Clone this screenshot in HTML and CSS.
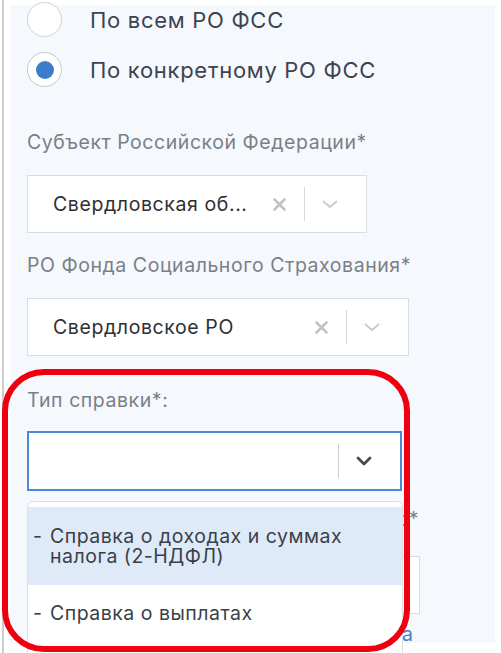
FILE: index.html
```html
<!DOCTYPE html>
<html lang="ru">
<head>
<meta charset="utf-8">
<title>Справка</title>
<link rel="stylesheet" href="styles.css">
</head>
<body>
<div class="rule"></div>
<main class="panel">
  <div class="radios">
    <label class="radio"><span class="circle"></span><span class="radio-text">По всем РО ФСС</span></label>
    <label class="radio"><span class="circle checked"><span class="dot"></span></span><span class="radio-text">По конкретному РО ФСС</span></label>
  </div>

  <div class="field field-1">
    <div class="label">Субъект Российской Федерации*</div>
    <div class="select select-1">
      <span class="value">Свердловская об...</span>
      <span class="clear"><svg width="13" height="13" viewBox="0 0 13 13"><path d="M1.5 1.5L11.5 11.5M11.5 1.5L1.5 11.5" stroke="#c2c2c2" stroke-width="2.6" stroke-linecap="round"/></svg></span>
      <span class="sep"></span>
      <span class="chev"><svg width="16" height="9" viewBox="0 0 16 9"><path d="M1.5 1.5L8 7L14.5 1.5" fill="none" stroke="#cacaca" stroke-width="1.8" stroke-linecap="round" stroke-linejoin="round"/></svg></span>
    </div>
  </div>

  <div class="field field-2">
    <div class="label">РО Фонда Социального Страхования*</div>
    <div class="select select-2">
      <span class="value">Свердловское РО</span>
      <span class="clear"><svg width="13" height="13" viewBox="0 0 13 13"><path d="M1.5 1.5L11.5 11.5M11.5 1.5L1.5 11.5" stroke="#c2c2c2" stroke-width="2.6" stroke-linecap="round"/></svg></span>
      <span class="sep"></span>
      <span class="chev"><svg width="16" height="9" viewBox="0 0 16 9"><path d="M1.5 1.5L8 7L14.5 1.5" fill="none" stroke="#cacaca" stroke-width="1.8" stroke-linecap="round" stroke-linejoin="round"/></svg></span>
    </div>
  </div>

  <div class="field field-3">
    <div class="label">Тип справки*:</div>
    <div class="select-wrap">
      <div class="select select-3 focused">
        <span class="value"></span>
        <span class="sep sep-dark"></span>
        <span class="chev"><svg width="16" height="10" viewBox="0 0 16 10"><path d="M2 2L8 8L14 2" fill="none" stroke="#4a4a4a" stroke-width="2.8" stroke-linecap="round" stroke-linejoin="round"/></svg></span>
      </div>
      <ul class="menu">
        <li class="option active"><span class="dash">-</span><span>Справка о доходах и суммах налога (2-НДФЛ)</span></li>
        <li class="option"><span class="dash">-</span><span>Справка о выплатах</span></li>
      </ul>
    </div>
  </div>

  <div class="field field-4">
    <div class="label label-4">Период*</div>
    <div class="select select-4"></div>
    <div class="link-row"><a class="link" href="#">Добавить сотрудника</a></div>
  </div>
</main>
<div class="annotation"></div>
</body>
</html>
```

FILE: styles.css
```css
* { box-sizing: border-box; }

html, body {
  margin: 0;
  padding: 0;
  background: #ffffff;
}

body {
  position: relative;
  display: flex;
  align-items: flex-start;
  width: 501px;
  height: 653px;
  overflow: hidden;
  font-family: Inter, "Noto Sans", sans-serif;
}

.rule {
  width: 2px;
  height: 653px;
  margin-left: 2px;
  background: #cdcdcd;
  flex: none;
}

.panel {
  flex: none;
  margin-left: 6px;
  margin-top: 5px;
  width: 485px;
  height: 638px;
  background: #f5f8fd;
  padding-left: 17px;
  display: flex;
  flex-direction: column;
}

.radios {
  display: flex;
  flex-direction: column;
  gap: 15px;
  margin-top: -3px;
}

.radio {
  display: flex;
  align-items: center;
  height: 35px;
}

.circle {
  width: 35px;
  height: 35px;
  border-radius: 50%;
  border: 1.5px solid #d2d2d2;
  background: #ffffff;
  display: flex;
  align-items: center;
  justify-content: center;
  flex: none;
}

.circle.checked { border-color: #c8c8c8; }

.dot {
  width: 18px;
  height: 18px;
  border-radius: 50%;
  background: #3b7dcc;
}

.radio-text {
  margin-left: 28px;
  font-size: 22px;
  color: #3d4350;
  letter-spacing: 0.7px;
}

.label {
  font-size: 19.5px;
  line-height: 24px;
  color: #7b7f86;
  letter-spacing: 0.55px;
}

.field-1 { margin-top: 43px; }
.field-2 { margin-top: 20px; }
.field-3 { margin-top: 32px; }
.field-4 { margin-top: 16px; }

.field-1 .label, .field-2 .label { margin-bottom: 21px; }
.field-3 .label { margin-bottom: 19px; }

.select {
  display: flex;
  align-items: center;
  height: 58px;
  background: #ffffff;
  border: 1px solid #d9dce1;
}

.select-1 { width: 340px; }
.select-2 { width: 382px; }

.value {
  flex: 1;
  padding-left: 25px;
  font-size: 19.5px;
  color: #2f2f33;
  letter-spacing: 0.6px;
  white-space: nowrap;
}

.clear {
  display: flex;
  margin-right: 18px;
}

.sep {
  width: 1px;
  height: 34px;
  background: #d8d8d8;
}

.chev {
  display: flex;
  width: 61px;
  padding-left: 17px;
}

.select-wrap { position: relative; }

.select-3 {
  width: 375px;
  height: 60px;
  border: 2px solid #4a8ad7;
}

.sep-dark { background: #cfcfcf; height: 34px; }

.menu {
  position: absolute;
  left: 0;
  top: 70px;
  width: 376px;
  margin: 0;
  padding: 5px 0 40px;
  list-style: none;
  background: #ffffff;
  border: 1px solid #dcdfe3;
  border-radius: 6px;
  z-index: 2;
}

.option {
  display: flex;
  padding: 18px 30px 17px 5px;
  font-size: 19.5px;
  line-height: 20px;
  color: #3a3f48;
  letter-spacing: 0.5px;
}

.option.active {
  background: #dfeaf9;
  padding-top: 19px;
  padding-bottom: 19px;
}

.dash {
  width: 17px;
  flex: none;
}

.label-4 {
  width: 392px;
  text-align: right;
  white-space: nowrap;
  margin-bottom: 25px;
}

.select-4 {
  width: 393px;
  height: 58px;
}

.link-row {
  display: flex;
  justify-content: flex-end;
  width: 386px;
  margin-top: 8px;
}

.link {
  font-size: 19.5px;
  color: #4a7fc2;
  text-decoration: none;
  white-space: nowrap;
}

.annotation {
  position: absolute;
  left: 2px;
  top: 369px;
  width: 408px;
  height: 283px;
  border: 6px solid #ee0010;
  border-radius: 42px;
  z-index: 5;
}
```
